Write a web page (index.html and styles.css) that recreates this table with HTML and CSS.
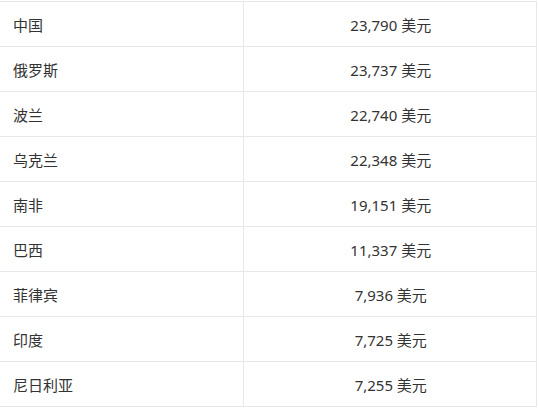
FILE: index.html
```html
<!DOCTYPE html>
<html lang="zh">
<head>
<meta charset="utf-8">
<link rel="stylesheet" href="styles.css">
</head>
<body>
<table class="gdp">
<tbody>
<tr><td class="name">中国</td><td class="val">23,790 美元</td></tr>
<tr><td class="name">俄罗斯</td><td class="val">23,737 美元</td></tr>
<tr><td class="name">波兰</td><td class="val">22,740 美元</td></tr>
<tr><td class="name">乌克兰</td><td class="val">22,348 美元</td></tr>
<tr><td class="name">南非</td><td class="val">19,151 美元</td></tr>
<tr><td class="name">巴西</td><td class="val">11,337 美元</td></tr>
<tr><td class="name">菲律宾</td><td class="val">7,936 美元</td></tr>
<tr><td class="name">印度</td><td class="val">7,725 美元</td></tr>
<tr><td class="name">尼日利亚</td><td class="val">7,255 美元</td></tr>
</tbody>
</table>
</body>
</html>
```
FILE: styles.css
```css
html, body {
  margin: 0;
  padding: 0;
  background: #ffffff;
}
body {
  padding-top: 1px;
  font-family: "Noto Sans", "Noto Sans CJK SC", sans-serif;
  font-size: 15px;
  color: #333333;
}
.gdp {
  border-collapse: collapse;
  width: 537px;
  table-layout: fixed;
}
.gdp td {
  height: 45px;
  padding: 0 12px;
  border-top: 1px solid #e6e8ea;
  border-bottom: 1px solid #e6e8ea;
  box-sizing: border-box;
  vertical-align: middle;
}
.gdp .name {
  width: 243px;
  padding-left: 13px;
  border-right: 1px solid #e6e8ea;
}
.gdp .val {
  text-align: center;
  padding-left: 14px;
  border-right: 1px solid #e6e8ea;
}
```
